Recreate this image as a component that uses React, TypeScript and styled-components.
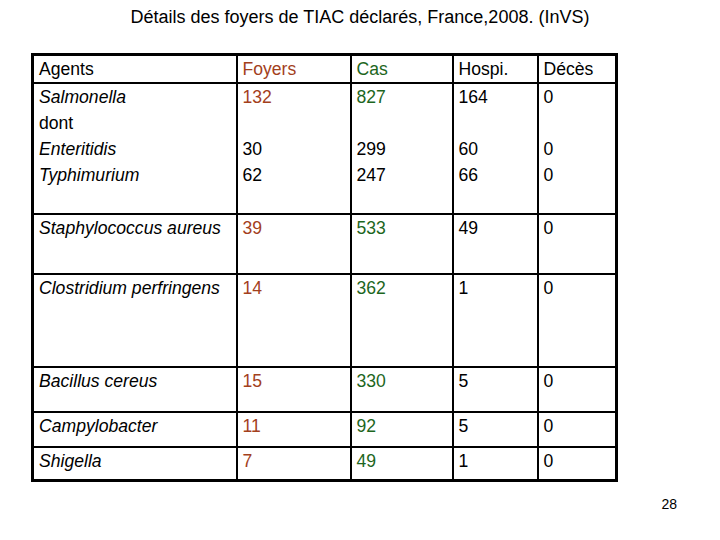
import React from "react";
import styled, { createGlobalStyle } from "styled-components";

const Global = createGlobalStyle`
  html, body { margin: 0; padding: 0; background: #fff; }
  body { font-family: "Liberation Sans", Arial, sans-serif; color: #000; }
`;

const Page = styled.div`
  width: 720px;
  height: 540px;
  box-sizing: border-box;
  display: flex;
  flex-direction: column;
  padding-top: 6px;
`;

const Title = styled.h1`
  margin: 0;
  font-size: 18px;
  font-weight: normal;
  line-height: 22px;
  text-align: center;
`;

const Table = styled.table`
  margin: 25px 0 0 31px;
  border-collapse: collapse;
  table-layout: fixed;
  width: 584px;
  border: 3px solid #000;
  font-size: 17.6px;
`;

const Row = styled.tr<{ $h: number }>`
  height: ${(p) => p.$h}px;
`;

const Cell = styled.td<{ $tone?: "brown" | "green" }>`
  border: 2px solid #000;
  vertical-align: top;
  padding: 0 0 0 5px;
  line-height: 26px;
  color: ${(p) => (p.$tone === "brown" ? "#a3401c" : p.$tone === "green" ? "#1d661d" : "#000")};
`;

const Line = styled.div<{ $italic?: boolean; $tone?: "brown" | "green" }>`
  font-style: ${(p) => (p.$italic ? "italic" : "normal")};
  color: ${(p) => (p.$tone === "brown" ? "#a3401c" : p.$tone === "green" ? "#1d661d" : "inherit")};
  height: 26px;
  white-space: nowrap;
`;

const Footer = styled.div`
  display: flex;
  justify-content: flex-end;
  padding: 14px 43px 0 0;
  font-size: 14px;
  line-height: 16px;
`;

type L = { t: string; i?: boolean };
type R = { h: number; agent: L[]; foyers: string[]; cas: string[]; hospi: string[]; deces: string[] };

const rows: R[] = [
  {
    h: 131,
    agent: [{ t: "Salmonella", i: true }, { t: "dont" }, { t: "Enteritidis", i: true }, { t: "Typhimurium", i: true }],
    foyers: ["132", "", "30", "62"],
    cas: ["827", "", "299", "247"],
    hospi: ["164", "", "60", "66"],
    deces: ["0", "", "0", "0"],
  },
  { h: 60, agent: [{ t: "Staphylococcus aureus", i: true }], foyers: ["39"], cas: ["533"], hospi: ["49"], deces: ["0"] },
  { h: 93, agent: [{ t: "Clostridium perfringens", i: true }], foyers: ["14"], cas: ["362"], hospi: ["1"], deces: ["0"] },
  { h: 45, agent: [{ t: "Bacillus cereus", i: true }], foyers: ["15"], cas: ["330"], hospi: ["5"], deces: ["0"] },
  { h: 35, agent: [{ t: "Campylobacter", i: true }], foyers: ["11"], cas: ["92"], hospi: ["5"], deces: ["0"] },
  { h: 33, agent: [{ t: "Shigella", i: true }], foyers: ["7"], cas: ["49"], hospi: ["1"], deces: ["0"] },
];

export default function App() {
  return (
    <Page>
      <Global />
      <Title>Détails des foyers de TIAC déclarés, France,2008. (InVS)</Title>
      <Table>
        <colgroup>
          <col style={{ width: 204 }} />
          <col style={{ width: 114 }} />
          <col style={{ width: 102 }} />
          <col style={{ width: 85 }} />
          <col style={{ width: 79 }} />
        </colgroup>
        <tbody>
          <Row $h={28}>
            <Cell>Agents</Cell>
            <Cell $tone="brown">Foyers</Cell>
            <Cell $tone="green">Cas</Cell>
            <Cell>Hospi.</Cell>
            <Cell>Décès</Cell>
          </Row>
          {rows.map((r, idx) => (
            <Row $h={r.h} key={idx}>
              <Cell>
                {r.agent.map((l, k) => (
                  <Line key={k} $italic={l.i}>{l.t}</Line>
                ))}
              </Cell>
              <Cell>
                {r.foyers.map((v, k) => (
                  <Line key={k} $tone={k === 0 ? "brown" : undefined}>{v}</Line>
                ))}
              </Cell>
              <Cell>
                {r.cas.map((v, k) => (
                  <Line key={k} $tone={k === 0 ? "green" : undefined}>{v}</Line>
                ))}
              </Cell>
              <Cell>
                {r.hospi.map((v, k) => <Line key={k}>{v}</Line>)}
              </Cell>
              <Cell>
                {r.deces.map((v, k) => <Line key={k}>{v}</Line>)}
              </Cell>
            </Row>
          ))}
        </tbody>
      </Table>
      <Footer>28</Footer>
    </Page>
  );
}
